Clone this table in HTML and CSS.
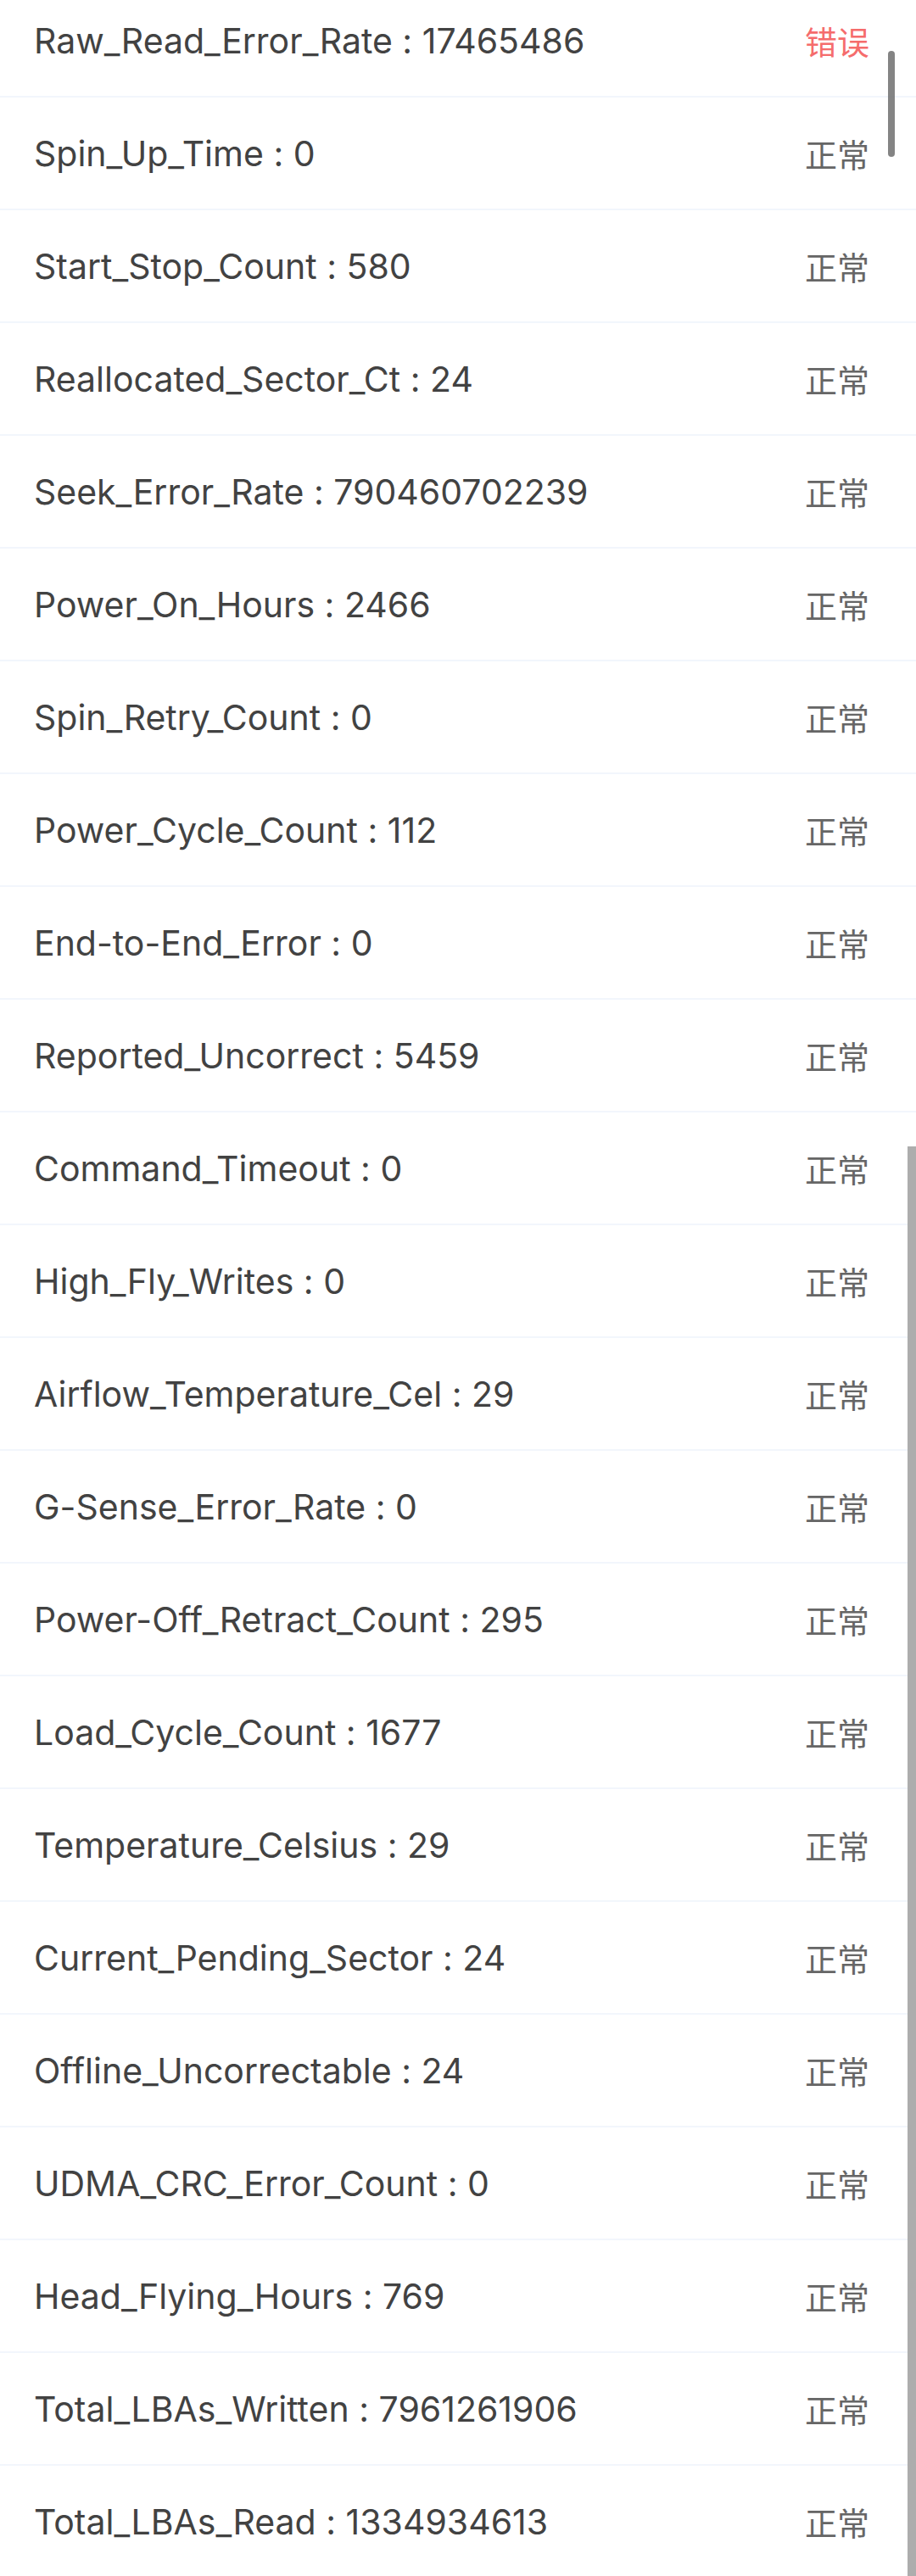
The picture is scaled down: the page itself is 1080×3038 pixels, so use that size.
FILE: index.html
```html
<!DOCTYPE html>
<html lang="zh-CN">
<head>
<meta charset="utf-8">
<title>SMART</title>
<link rel="stylesheet" href="styles.css">
</head>
<body>
<div class="page">
  <ul class="list">
    <li class="row"><span class="label">Raw_Read_Error_Rate : 17465486</span><span class="status error">错误</span></li>
    <li class="row"><span class="label">Spin_Up_Time : 0</span><span class="status">正常</span></li>
    <li class="row"><span class="label">Start_Stop_Count : 580</span><span class="status">正常</span></li>
    <li class="row"><span class="label">Reallocated_Sector_Ct : 24</span><span class="status">正常</span></li>
    <li class="row"><span class="label">Seek_Error_Rate : 790460702239</span><span class="status">正常</span></li>
    <li class="row"><span class="label">Power_On_Hours : 2466</span><span class="status">正常</span></li>
    <li class="row"><span class="label">Spin_Retry_Count : 0</span><span class="status">正常</span></li>
    <li class="row"><span class="label">Power_Cycle_Count : 112</span><span class="status">正常</span></li>
    <li class="row"><span class="label">End-to-End_Error : 0</span><span class="status">正常</span></li>
    <li class="row"><span class="label">Reported_Uncorrect : 5459</span><span class="status">正常</span></li>
    <li class="row"><span class="label">Command_Timeout : 0</span><span class="status">正常</span></li>
    <li class="row"><span class="label">High_Fly_Writes : 0</span><span class="status">正常</span></li>
    <li class="row"><span class="label">Airflow_Temperature_Cel : 29</span><span class="status">正常</span></li>
    <li class="row"><span class="label">G-Sense_Error_Rate : 0</span><span class="status">正常</span></li>
    <li class="row"><span class="label">Power-Off_Retract_Count : 295</span><span class="status">正常</span></li>
    <li class="row"><span class="label">Load_Cycle_Count : 1677</span><span class="status">正常</span></li>
    <li class="row"><span class="label">Temperature_Celsius : 29</span><span class="status">正常</span></li>
    <li class="row"><span class="label">Current_Pending_Sector : 24</span><span class="status">正常</span></li>
    <li class="row"><span class="label">Offline_Uncorrectable : 24</span><span class="status">正常</span></li>
    <li class="row"><span class="label">UDMA_CRC_Error_Count : 0</span><span class="status">正常</span></li>
    <li class="row"><span class="label">Head_Flying_Hours : 769</span><span class="status">正常</span></li>
    <li class="row"><span class="label">Total_LBAs_Written : 7961261906</span><span class="status">正常</span></li>
    <li class="row"><span class="label">Total_LBAs_Read : 1334934613</span><span class="status">正常</span></li>
  </ul>
  <div class="thumb"></div>
  <div class="outer-thumb"></div>
</div>
</body>
</html>
```
FILE: styles.css
```css
html, body {
  margin: 0;
  padding: 0;
  background: #ffffff;
  overflow: hidden;
}
.page {
  position: relative;
  width: 1080px;
  height: 3038px;
  overflow: hidden;
  font-family: Inter, "Noto Sans CJK SC", sans-serif;
}
.list {
  list-style: none;
  margin: -18px 0 0 0;
  padding: 0;
}
.row {
  display: flex;
  align-items: center;
  justify-content: space-between;
  height: 131px;
  padding: 0 55px 0 40px;
  border-bottom: 2px solid #f2f6fc;
}
.label {
  font-family: Inter, sans-serif;
  font-size: 41px;
  color: #424242;
  font-feature-settings: "calt" 0;
}
.status {
  font-family: "Noto Sans CJK SC", sans-serif;
  font-size: 38px;
  color: #666666;
}
.status.error {
  color: #f56c6c;
}
.thumb {
  position: absolute;
  left: 1047px;
  top: 60px;
  width: 8px;
  height: 125px;
  border-radius: 4px;
  background: rgba(110, 110, 110, 0.85);
}
.outer-thumb {
  position: absolute;
  left: 1070px;
  top: 1352px;
  width: 10px;
  bottom: 0;
  background: #adadad;
}
```
